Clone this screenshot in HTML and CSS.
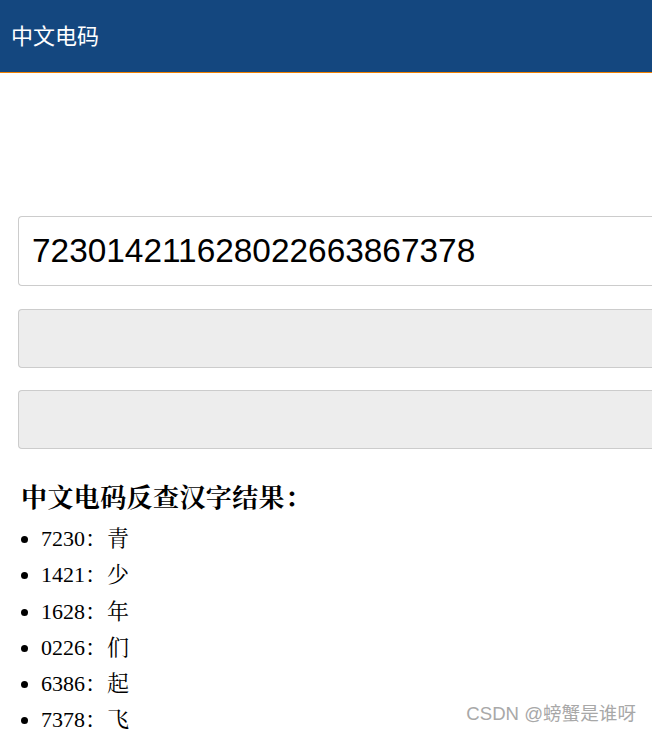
FILE: index.html
```html
<!DOCTYPE html>
<html lang="zh-CN">
<head>
<meta charset="utf-8">
<title>中文电码</title>
<link rel="stylesheet" href="styles.css">
</head>
<body>
<header class="topbar"><span class="title">中文电码</span></header>
<main class="content">
  <div class="code-input">723014211628022663867378</div>
  <div class="btn-box"></div>
  <div class="btn-box"></div>
  <h2 class="result-title">中文电码反查汉字结果：</h2>
  <ul class="result-list">
    <li>7230：青</li>
    <li>1421：少</li>
    <li>1628：年</li>
    <li>0226：们</li>
    <li>6386：起</li>
    <li>7378：飞</li>
  </ul>
</main>
<div class="watermark">CSDN @螃蟹是谁呀</div>
</body>
</html>
```
FILE: styles.css
```css
html, body {
  margin: 0;
  padding: 0;
  width: 652px;
  height: 734px;
  overflow: hidden;
  background: #ffffff;
}
body {
  position: relative;
  font-family: "Liberation Serif", "Noto Serif CJK SC", "Noto Sans CJK SC", serif;
}
.topbar {
  height: 68px;
  background: #14477f;
  border-bottom: 1px solid #f08000;
  display: flex;
  align-items: center;
  padding-left: 11px;
  padding-bottom: 4px;
}
.title {
  color: #ffffff;
  font-family: "Noto Sans CJK SC", sans-serif;
  font-size: 22px;
  line-height: 1;
}
.content {
  padding: 143px 0 0 18px;
  overflow: hidden;
}
.code-input {
  width: 720px;
  height: 68px;
  border: 1px solid #cccccc;
  border-right: none;
  border-radius: 4px 0 0 4px;
  padding-left: 13px;
  display: flex;
  align-items: center;
  font-family: "Liberation Sans", "DejaVu Sans", sans-serif;
  font-size: 33.4px;
  color: #000000;
  white-space: nowrap;
}
.btn-box {
  width: 720px;
  height: 57px;
  border: 1px solid #cccccc;
  border-right: none;
  border-radius: 4px 0 0 4px;
  background: #ededed;
  margin-top: 22px;
}
.code-input + .btn-box {
  margin-top: 23px;
}
.result-title {
  margin: 37px 0 0 3px;
  font-size: 26px;
  line-height: 26px;
  font-weight: bold;
  letter-spacing: 0.4px;
  color: #000;
}
.result-list {
  margin: 9px 0 0 0;
  padding-left: 23px;
  list-style: disc;
  font-size: 22px;
  line-height: 36.3px;
  color: #000;
}
.watermark {
  position: absolute;
  right: 16px;
  bottom: 8px;
  font-family: "Liberation Sans", "Noto Sans CJK SC", sans-serif;
  font-size: 18.6px;
  line-height: 24px;
  color: #a8a8a8;
}
```
